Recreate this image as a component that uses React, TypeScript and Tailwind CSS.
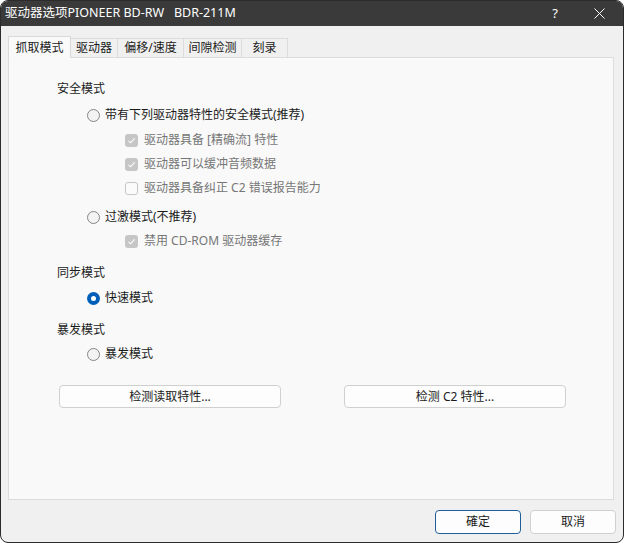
import React from "react";

const font = { fontFamily: '"Noto Sans", "Noto Sans CJK SC", sans-serif' };

const tabs = ["抓取模式", "驱动器", "偏移/速度", "间隙检测", "刻录"];
const tabWidths = ["w-[63px]", "w-[47px]", "w-[66px]", "w-[58px]", "w-[46px]"];

const Radio = ({ checked = false }: { checked?: boolean }) =>
  checked ? (
    <span className="w-[13px] h-[13px] rounded-full bg-[#005fb8] flex items-center justify-center shrink-0">
      <span className="w-[5px] h-[5px] rounded-full bg-white" />
    </span>
  ) : (
    <span className="w-[13px] h-[13px] rounded-full border border-[#858585] bg-[#f3f3f3] shrink-0" />
  );

const Check = ({ checked = false }: { checked?: boolean }) =>
  checked ? (
    <span className="w-[13px] h-[13px] rounded-[3px] bg-[#c6c6c6] flex items-center justify-center shrink-0">
      <svg width="9" height="9" viewBox="0 0 9 9" fill="none">
        <path d="M1.5 4.8 L3.6 6.8 L7.6 2.4" stroke="#fff" strokeWidth="1.1" />
      </svg>
    </span>
  ) : (
    <span className="w-[13px] h-[13px] rounded-[3px] border border-[#c6c6c6] bg-[#fbfbfb] shrink-0" />
  );

export default function App() {
  return (
    <div className="w-[624px] h-[543px] bg-white" style={font}>
      <div className="w-full h-full flex flex-col bg-[#f0f0f0] border border-[#2b2b2b] rounded-[8px] overflow-hidden text-[12px] text-[#1b1b1b]">
        {/* Title bar */}
        <div className="h-[25px] bg-[#3a3a3a] flex items-center pl-[4px] shrink-0">
          <span className="text-white text-[12.5px] whitespace-pre flex-1">驱动器选项PIONEER BD-RW   BDR-211M</span>
          <span className="text-white text-[13px] mr-[36px]">?</span>
          <svg width="11" height="11" viewBox="0 0 11 11" className="mr-[18px]">
            <path d="M0.5 0.5 L10.5 10.5 M10.5 0.5 L0.5 10.5" stroke="#fff" strokeWidth="1" />
          </svg>
        </div>

        {/* Tabs */}
        <div className="flex items-end pl-[7px] mt-[10px] h-[21px] shrink-0">
          {tabs.map((t, i) => (
            <div
              key={t}
              className={`${tabWidths[i]} flex items-center justify-center ${
                i === 0
                  ? "h-[22px] bg-[#f9f9f9] border border-b-0 border-[#d9d9d9] relative z-10 -mb-px"
                  : "h-[19px] bg-[#f0f0f0] border border-b-0 border-l-0 border-[#dcdcdc]"
              }`}
            >
              {t}
            </div>
          ))}
        </div>

        {/* Panel */}
        <div className="mx-[7px] w-[606px] h-[443px] bg-[#f9f9f9] border border-[#dcdcdc] flex flex-col pl-[48px] pt-[19px] shrink-0">
          <div className="h-[24px] flex items-center">安全模式</div>
          <div className="h-[24px] mt-[2px] flex items-center gap-[5px] pl-[30px]">
            <Radio />
            <span>带有下列驱动器特性的安全模式(推荐)</span>
          </div>
          <div className="mt-[1px] pl-[68px] flex flex-col text-[#767676]">
            <div className="h-[24px] flex items-center gap-[6px]">
              <Check checked />
              <span>驱动器具备 [精确流] 特性</span>
            </div>
            <div className="h-[24px] flex items-center gap-[6px]">
              <Check checked />
              <span>驱动器可以缓冲音频数据</span>
            </div>
            <div className="h-[24px] flex items-center gap-[6px]">
              <Check />
              <span>驱动器具备纠正 C2 错误报告能力</span>
            </div>
          </div>
          <div className="h-[24px] mt-[5px] flex items-center gap-[5px] pl-[30px]">
            <Radio />
            <span>过激模式(不推荐)</span>
          </div>
          <div className="h-[24px] pl-[68px] flex items-center gap-[6px] text-[#767676]">
            <Check checked />
            <span>禁用 CD-ROM 驱动器缓存</span>
          </div>

          <div className="h-[24px] mt-[8px] flex items-center">同步模式</div>
          <div className="h-[24px] mt-[1px] flex items-center gap-[5px] pl-[30px]">
            <Radio checked />
            <span>快速模式</span>
          </div>

          <div className="h-[24px] mt-[8px] flex items-center">暴发模式</div>
          <div className="h-[24px] flex items-center gap-[5px] pl-[30px]">
            <Radio />
            <span>暴发模式</span>
          </div>

          <div className="flex mt-[19px] gap-[63px] pl-[2px]">
            <button className="w-[222px] h-[23px] bg-[#fdfdfd] border border-[#d0d0d0] rounded-[4px] flex items-center justify-center">
              检测读取特性...
            </button>
            <button className="w-[222px] h-[23px] bg-[#fdfdfd] border border-[#d0d0d0] rounded-[4px] flex items-center justify-center">
              检测 C2 特性...
            </button>
          </div>
        </div>

        {/* Footer buttons */}
        <div className="flex justify-end gap-[9px] pr-[7px] mt-[10px]">
          <button className="w-[86px] h-[24px] bg-[#fdfdfd] border border-[#1f5f99] rounded-[4px] flex items-center justify-center">
            確定
          </button>
          <button className="w-[86px] h-[24px] bg-[#fdfdfd] border border-[#d0d0d0] rounded-[4px] flex items-center justify-center">
            取消
          </button>
        </div>
      </div>
    </div>
  );
}
